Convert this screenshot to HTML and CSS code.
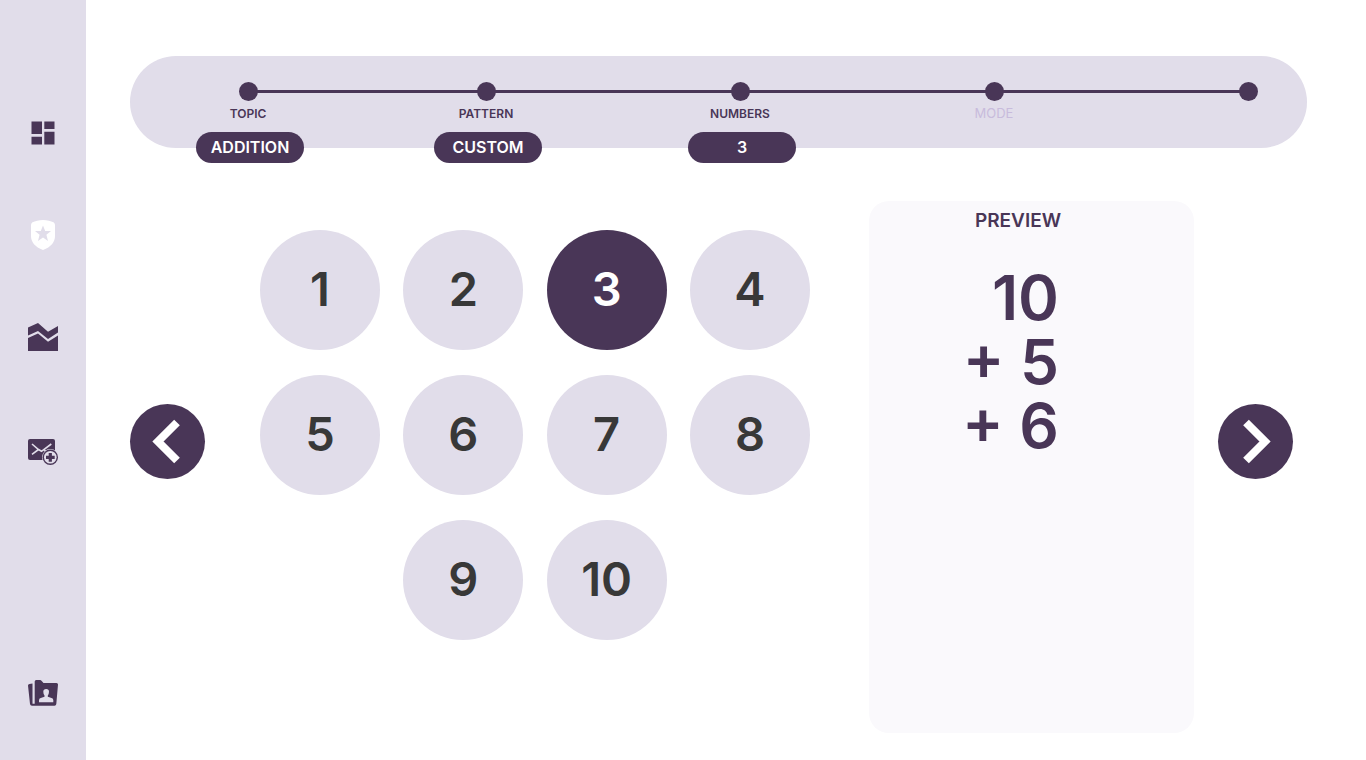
FILE: index.html
```html
<!DOCTYPE html>
<html lang="en">
<head>
<meta charset="utf-8">
<meta name="viewport" content="width=device-width, initial-scale=1">
<title>Numbers</title>
<link rel="stylesheet" href="styles.css">
</head>
<body>
<nav class="sidebar" aria-label="Main">
  <a class="side-link" href="#" aria-label="Dashboard"><svg viewBox="0 0 32 32"><path d="M4.5 4.5H15V17H4.5zM17.3 4.5H27.5V12H17.3zM4.5 19.7H15V27.5H4.5zM17.3 14.7H27.5V27.5H17.3z"/></svg></a>
  <a class="side-link active" href="#" aria-label="Practice"><svg viewBox="0 0 32 32"><path fill-rule="evenodd" d="M16 1C20 1 24 2 26.500 3.300Q28 4.200 28 6V17C28 23 24 28 16 31C8 28 4 23 4 17V6Q4 4.200 5.500 3.300C8 2 12 1 16 1zM16 6.500L13.800 12H8L12.600 15.700L11 22L16 18.600L21 22L19.400 15.700L24 12H18.200z"/></svg></a>
  <a class="side-link" href="#" aria-label="Statistics"><svg viewBox="0 0 32 32"><path d="M1 6.500L11 2L21 10.700L31 5V11.500L21 18L11 10L1 14.500zM1 17L11 12.500L21 20.800L31 14.500V30H1z"/></svg></a>
  <a class="side-link reports" href="#" aria-label="Add report"><svg viewBox="0 0 32 32"><rect x="1" y="4" width="27" height="21" rx="2"/><path class="cut-line" d="M5 9L11.500 14.500L14.500 16.300L24.300 9M5 19.300L11.500 14.500M17 14.500L20 18"/><circle class="cut" cx="23.300" cy="22.300" r="8.300"/><circle cx="23.300" cy="22.300" r="7.700"/><circle class="cut" cx="23.300" cy="22.300" r="6.300"/><path d="M21.700 18H24.900V20.700H27.700V23.900H24.900V26.700H21.700V23.900H19V20.700H21.700z"/></svg></a>
  <a class="side-link account" href="#" aria-label="Account"><svg viewBox="0 0 32 32"><path d="M1 8.500Q1 7 2.500 7L5.500 6.500V26.700H7.700V4.500Q7.700 3 9.200 3H13Q14 3 14.700 4L16.500 6H29.500Q31 6 31 7.500L29.300 27Q29.100 28.700 27.500 28.700H5Q3.300 28.700 3 27z"/><path class="cut" d="M12 25.300V23Q12 21.300 14.500 20.700L17.500 19.700V18.500Q16.300 17 16.300 14.800Q16.300 12 19.200 12Q22 12 22 14.800Q22 17 20.800 18.500V19.700L23.800 20.700Q26.300 21.300 26.300 23V25.300z"/></svg></a>
</nav>
<main class="page">
  <ol class="stepper">
    <li class="step"><span class="dot"></span><span class="label">TOPIC</span><span class="value">ADDITION</span></li>
    <li class="connector first" aria-hidden="true"></li>
    <li class="step"><span class="dot"></span><span class="label">PATTERN</span><span class="value">CUSTOM</span></li>
    <li class="connector" aria-hidden="true"></li>
    <li class="step"><span class="dot"></span><span class="label">NUMBERS</span><span class="value">3</span></li>
    <li class="connector" aria-hidden="true"></li>
    <li class="step"><span class="dot"></span><span class="label pending">MODE</span></li>
    <li class="connector" aria-hidden="true"></li>
    <li class="step"><span class="dot"></span></li>
  </ol>
  <div class="workspace">
    <button class="arrow" type="button" aria-label="Previous"><svg viewBox="0 0 75 75"><path d="M47 18.500L28 37.500L47 56.500"/></svg></button>
    <div class="picker">
      <button class="number" type="button">1</button>
      <button class="number" type="button">2</button>
      <button class="number selected" type="button" aria-pressed="true">3</button>
      <button class="number" type="button">4</button>
      <button class="number" type="button">5</button>
      <button class="number" type="button">6</button>
      <button class="number" type="button">7</button>
      <button class="number" type="button">8</button>
      <button class="number last-row" type="button">9</button>
      <button class="number" type="button">10</button>
    </div>
    <section class="preview">
      <h2 class="preview-title">PREVIEW</h2>
      <div class="sum">10<br>+ 5<br>+ 6</div>
    </section>
    <button class="arrow" type="button" aria-label="Next"><svg viewBox="0 0 75 75"><path d="M28 18.500L47 37.500L28 56.500"/></svg></button>
  </div>
</main>
</body>
</html>
```
FILE: styles.css
```css
:root {
  --plum: #493657;
  --lilac: #e1ddea;
}
* { box-sizing: border-box; }
body {
  margin: 0;
  display: flex;
  min-height: 100vh;
  background: #fff;
  color: var(--plum);
  font-family: Inter, "Liberation Sans", sans-serif;
}
button {
  border: 0;
  padding: 0;
  font: inherit;
  cursor: pointer;
}
.sidebar {
  flex: 0 0 86px;
  display: flex;
  flex-direction: column;
  align-items: center;
  gap: 70px;
  padding: 117px 0 51px;
  background: var(--lilac);
}
.side-link { width: 32px; height: 32px; color: var(--plum); }
.side-link svg { display: block; fill: currentColor; }
.side-link.active { color: #fff; }
.side-link.reports { margin-top: 12px; }
.side-link.account { margin-top: auto; }
.side-link .cut { fill: var(--lilac); }
.side-link .cut-line { fill: none; stroke: var(--lilac); stroke-width: 1.6; }
.page {
  flex: 1;
  display: flex;
  flex-direction: column;
  padding: 56px 59px 27px 44px;
}
.stepper {
  display: flex;
  margin: 0 0 53px;
  padding: 26px 5px 0 64px;
  list-style: none;
  background: var(--lilac);
  border-radius: 46px;
}
.step {
  flex: 0 0 108px;
  display: flex;
  flex-direction: column;
  align-items: center;
}
.dot { width: 19px; height: 19px; border-radius: 50%; background: var(--plum); }
.label { margin-top: 4px; font-size: 12px; line-height: 17px; font-weight: 600; }
.label.pending { color: #c8bbdc; font-size: 13px; font-weight: 400; }
.value {
  align-self: stretch;
  margin: 10px -2px -15px 2px;
  border-radius: 16px;
  background: var(--plum);
  color: #fff;
  font-size: 16px;
  line-height: 31px;
  font-weight: 600;
  text-align: center;
}
.connector {
  flex: 127 0 0;
  height: 3px;
  margin: 8px -54px 0;
  background: var(--plum);
}
.connector.first { flex-grow: 119; }
.workspace {
  flex: 1;
  display: flex;
  padding-right: 14px;
}
.arrow {
  flex: 0 0 75px;
  height: 75px;
  align-self: center;
  margin-bottom: 51px;
  border-radius: 50%;
  background: var(--plum);
}
.arrow svg { display: block; fill: none; stroke: #fff; stroke-width: 8; }
.picker {
  flex: 550 1 0;
  display: grid;
  grid-template-columns: repeat(4, 120px);
  justify-content: space-between;
  align-content: start;
  row-gap: 25px;
  margin: 29px 59px 0 55px;
}
.number {
  height: 120px;
  padding-bottom: 3px;
  border-radius: 50%;
  background: var(--lilac);
  color: #383838;
  font-size: 47px;
  font-weight: 600;
}
.number.selected { background: var(--plum); color: #fff; }
.number.last-row { grid-column: 2; }
.preview {
  flex: 325 1 0;
  margin-right: 24px;
  padding-top: 7px;
  min-height: 532px;
  border-radius: 20px;
  background: #faf9fc;
}
.preview-title {
  margin: 0 27px 32px 0;
  font-size: 19px;
  line-height: 26px;
  font-weight: 600;
  text-align: center;
}
.sum {
  padding-right: 135px;
  font-size: 62px;
  line-height: 64px;
  font-weight: 600;
  text-align: right;
}
```
